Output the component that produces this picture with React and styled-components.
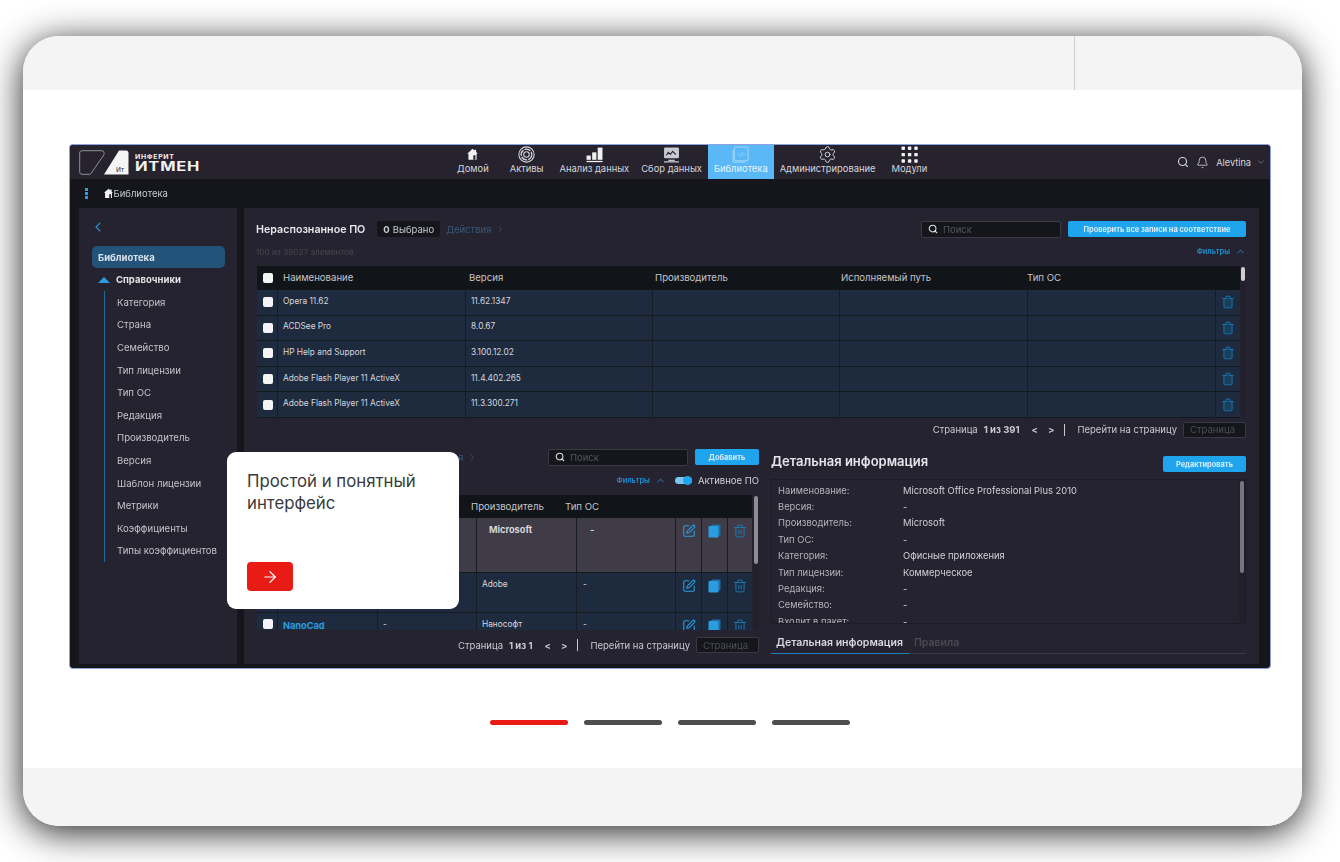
import React from "react";
import styled, { createGlobalStyle } from "styled-components";
import {
  ArrowRight,
  Bell,
  ChevronDown,
  ChevronLeft,
  ChevronRight,
  ChevronUp,
  Search,
  Settings,
  SquarePen,
  Trash2,
} from "lucide-react";

const GlobalStyle = createGlobalStyle`
  html, body {
    margin: 0;
    padding: 0;
    background: #fff;
    overflow: hidden;
  }
  body {
    font-family: Inter, "Noto Sans", sans-serif;
  }
`;

const Page = styled.div`
  width: 1340px;
  height: 862px;
  box-sizing: border-box;
  padding: 36px 38px 36px 23px;
`;

const Card = styled.div`
  height: 790px;
  display: flex;
  flex-direction: column;
  border-radius: 36px;
  background: #fff;
  overflow: hidden;
  box-shadow: 0 6px 36px rgba(0, 0, 0, 0.88);
`;

const TopStrip = styled.div`
  height: 54px;
  flex: none;
  background: #f4f4f4;
`;

const TopDivider = styled.div`
  width: 1052px;
  height: 100%;
  box-sizing: border-box;
  border-right: 1px solid #cfcfcf;
`;

const Stage = styled.div`
  flex: 1;
  display: flex;
  flex-direction: column;
  align-items: flex-start;
  padding: 54px 0 0 46px;
`;

const BottomStrip = styled.div`
  height: 58px;
  flex: none;
  background: #f4f4f4;
`;

const Pager = styled.div`
  display: flex;
  gap: 16px;
  margin: 51px 0 0 421px;
`;

const PagerBar = styled.div`
  width: 78px;
  height: 5px;
  border-radius: 3px;
  background: ${(p) => (p.$active ? "#e81c14" : "#4d4e50")};
`;

const AppFrame = styled.div`
  position: relative;
  width: 1202px;
  height: 525px;
  box-sizing: border-box;
  display: flex;
  flex-direction: column;
  border: 1px solid #8ea2dc;
  border-radius: 4px;
  background: #14161b;
  color: #d9d9de;
  overflow: hidden;
`;

const Blurred = styled.div`
  display: flex;
  flex-direction: column;
  flex: 1;
  min-height: 0;
  filter: blur(0.55px);
`;

const AppHeader = styled.header`
  height: 34px;
  flex: none;
  display: flex;
  align-items: stretch;
  background: #26232f;
`;

const Logo = styled.div`
  width: 381px;
  flex: none;
  display: flex;
  align-items: center;
  padding-left: 9px;
  box-sizing: border-box;
`;

const LogoMark = styled.svg`
  width: 50px;
  height: 25px;
  flex: none;
`;

const LogoWords = styled.div`
  display: flex;
  flex-direction: column;
  gap: 1px;
  margin-left: 6px;
  color: #f2f2f2;
`;

const LogoSmall = styled.span`
  font-size: 6px;
  line-height: 7px;
  font-weight: 700;
  letter-spacing: 0.6px;
  transform: scaleX(1.15);
  transform-origin: left;
`;

const LogoBig = styled.span`
  font-size: 13px;
  line-height: 11px;
  font-weight: 700;
  letter-spacing: 0.6px;
  transform: scaleX(1.27);
  transform-origin: left;
`;

const Nav = styled.nav`
  display: flex;
  align-items: stretch;
`;

const NavItem = styled.div`
  display: flex;
  flex-direction: column;
  align-items: center;
  justify-content: flex-end;
  padding: 0 6px 5.5px;
  margin-right: ${(p) => p.$gap || 0}px;
  font-size: 9.4px;
  line-height: 11px;
  white-space: nowrap;
  color: ${(p) => (p.$active ? "#e6f4fe" : "#d5d5da")};
  background: ${(p) => (p.$active ? "#5ab8f6" : "transparent")};
`;

const NavIcon = styled.svg`
  width: 17px;
  height: 17px;
  flex: none;
`;

const HomeIcon = styled.svg`
  box-sizing: border-box;
  width: ${(p) => p.$size}px;
  height: ${(p) => p.$size}px;
  padding: ${(p) => p.$pad || 0}px 0;
  flex: none;
`;

const GearIcon = styled(Settings)`
  margin: -1px 0;
`;

const UserBox = styled.div`
  margin-left: auto;
  display: flex;
  align-items: center;
  gap: 7px;
  padding-right: 4px;
  font-size: 9.2px;
  color: #d5d5da;
`;

const UserChevron = styled(ChevronDown)`
  margin-left: -2px;
  color: #777;
`;

const Crumbs = styled.div`
  height: 29px;
  flex: none;
  display: flex;
  align-items: center;
  padding-left: 15px;
  font-size: 9.5px;
  color: #c9c9cf;
`;

const DotsColumn = styled.div`
  display: flex;
  flex-direction: column;
  gap: 1.5px;
  margin-right: 15px;
`;

const BlueDot = styled.span`
  width: 2.5px;
  height: 2.5px;
  background: #2a9de0;
`;

const Body = styled.div`
  flex: 1;
  min-height: 0;
  display: flex;
  gap: 7px;
  padding: 0 11px 4px 9px;
`;

const Sidebar = styled.aside`
  width: 158px;
  flex: none;
  box-sizing: border-box;
  padding: 11px 12px 0 13px;
  background: #25232f;
`;

const BackIcon = styled(ChevronLeft)`
  display: block;
  margin-left: -2px;
  color: #2a8fd0;
`;

const LibraryPill = styled.div`
  height: 22px;
  margin-top: 11px;
  display: flex;
  align-items: center;
  padding-left: 6px;
  border-radius: 5px;
  background: #235378;
  font-size: 9.5px;
  font-weight: 700;
  color: #d8e2ea;
`;

const TreeHead = styled.div`
  height: 23px;
  display: flex;
  align-items: center;
  gap: 6px;
  padding-left: 6px;
  font-size: 9.5px;
  font-weight: 700;
  color: #e4e4e8;
`;

const Triangle = styled.span`
  width: 0;
  height: 0;
  border-left: 6px solid transparent;
  border-right: 6px solid transparent;
  border-bottom: 6px solid #2a9de0;
`;

const TreeList = styled.div`
  margin-left: 12px;
  padding-left: 12px;
  border-left: 1px solid #1e6a9c;
  height: 271px;
  width: 125px;
  white-space: nowrap;
`;

const TreeItem = styled.div`
  height: 22.6px;
  display: flex;
  align-items: center;
  font-size: 9.6px;
  color: #c4c4ca;
`;

const Main = styled.main`
  flex: 1;
  min-width: 0;
  box-sizing: border-box;
  padding: 13px 13px 0;
  background: #25232f;
`;

const Toolbar = styled.div`
  height: 16px;
  display: flex;
  align-items: center;
`;

const PanelTitle = styled.h2`
  margin: 0 0 0 -1px;
  font-size: 10.7px;
  font-weight: 600;
  color: #e6e6ea;
  white-space: nowrap;
`;

const SelectedBadge = styled.div`
  display: flex;
  align-items: center;
  gap: 3px;
  height: 16px;
  margin-left: 12px;
  padding: 0 6px;
  border-radius: 2px;
  background: #14161b;
  font-size: 9.5px;
  color: #c9c9cf;
`;

const ActionsLink = styled.div`
  display: flex;
  align-items: center;
  gap: 5px;
  margin-left: ${(p) => p.$left || 6}px;
  font-size: 9.5px;
  color: #345a7a;
`;

const SearchBox = styled.div`
  width: ${(p) => p.$width}px;
  height: 17px;
  box-sizing: border-box;
  display: flex;
  align-items: center;
  gap: 5px;
  margin-left: auto;
  padding-left: 6px;
  border: 1px solid #3a3a44;
  border-radius: 2px;
  background: #14161b;
  font-size: 9.5px;
  color: #55555e;
`;

const BlueButton = styled.div`
  width: ${(p) => p.$width}px;
  height: 16px;
  display: flex;
  align-items: center;
  justify-content: center;
  margin-left: 7px;
  border-radius: 2px;
  background: #1fa5ee;
  font-size: 7.4px;
  font-weight: 700;
  color: #d5ecfb;
  white-space: nowrap;
`;

const MetaRow = styled.div`
  height: 29px;
  margin-left: -1px;
  display: flex;
  align-items: center;
  justify-content: space-between;
  font-size: 8.2px;
  color: #45454f;
`;

const FiltersLink = styled.div`
  display: flex;
  align-items: center;
  gap: 5px;
  font-size: 7.4px;
  font-weight: 600;
  color: #1f8fd2;
`;

const TableWrap = styled.div`
  height: ${(p) => p.$height}px;
  display: flex;
  overflow: hidden;
`;

const Table = styled.div`
  width: ${(p) => p.$width}px;
  flex: none;
`;

const HeadRow = styled.div`
  height: ${(p) => p.$height}px;
  box-sizing: border-box;
  padding-bottom: 1px;
  display: grid;
  grid-template-columns: ${(p) => p.$cols};
  align-items: center;
  background: #111418;
  font-size: 9.6px;
  color: #c4c4ca;
`;

const Check = styled.span`
  width: 10px;
  height: 10px;
  margin-left: 6px;
  border-radius: 2px;
  background: #f4f4f4;
`;

const DataRow = styled.div`
  height: ${(p) => p.$height}px;
  box-sizing: border-box;
  display: grid;
  grid-template-columns: ${(p) => p.$cols};
  border-bottom: 1px solid #14181f;
  background: ${(p) => (p.$selected ? "#3f3c47" : "#1e2b3f")};
  font-size: 8.3px;
  color: #d6d6dc;
`;

const Cell = styled.div`
  min-width: 0;
  box-sizing: border-box;
  display: flex;
  align-items: ${(p) => (p.$top ? "flex-start" : "center")};
  justify-content: ${(p) => (p.$center ? "center" : "flex-start")};
  padding-top: ${(p) => (p.$top ? p.$topGap || 6 : 0)}px;
  padding-bottom: ${(p) => (p.$lift ? 3 : 0)}px;
  padding-left: ${(p) => (p.$pad !== undefined ? p.$pad : 5)}px;
  border-left: ${(p) => (p.$first ? "none" : "1px solid #161b25")};
  font-weight: ${(p) => (p.$bold ? 700 : 400)};
  font-size: ${(p) => (p.$bold ? "9.2px" : "inherit")};
  color: ${(p) => (p.$link ? "#2a9de0" : "inherit")};
  white-space: nowrap;
  overflow: hidden;
`;

const ScrollTrack = styled.div`
  width: 6px;
  flex: none;
  box-sizing: border-box;
  margin-left: ${(p) => p.$left || 0}px;
  padding: 1px 1px 0;
  background: #22212b;
`;

const ScrollThumb = styled.div`
  height: ${(p) => p.$height}px;
  border-radius: 2px;
  background: ${(p) => p.$color || "#cfcfd3"};
`;

const Pagination = styled.div`
  height: ${(p) => p.$height}px;
  display: flex;
  align-items: center;
  justify-content: flex-end;
  font-size: 9.5px;
  color: #c9c9cf;
  white-space: nowrap;
`;

const PageCount = styled.b`
  margin-left: 6px;
  font-weight: 700;
`;

const PageArrows = styled.span`
  display: flex;
  gap: 10px;
  margin: 0 10px 0 12px;
  font-weight: 700;
`;

const PageSep = styled.span`
  width: 1px;
  height: 12px;
  margin-right: 12px;
  background: #c9c9cf;
`;

const PageInput = styled.div`
  width: 63px;
  height: 16px;
  box-sizing: border-box;
  display: flex;
  align-items: center;
  margin-left: 6px;
  padding-left: 6px;
  border: 1px solid #3a3a44;
  border-radius: 2px;
  background: #14161b;
  color: #4e4e58;
`;

const LowerGrid = styled.div`
  display: grid;
  grid-template-columns: 502px 475px;
  gap: 12px;
  margin-top: 8px;
`;

const ToggleRow = styled.div`
  height: 30px;
  display: flex;
  align-items: center;
  justify-content: flex-end;
  gap: 6px;
  font-size: 9.5px;
  color: #d0d0d6;
`;

const ToggleTrack = styled.span`
  width: 17px;
  height: 7px;
  display: flex;
  align-items: center;
  justify-content: flex-end;
  margin-left: 3px;
  border-radius: 4px;
  background: #7cc4ef;
`;

const ToggleKnob = styled.span`
  width: 9px;
  height: 9px;
  border-radius: 50%;
  background: #1fa5ee;
`;

const DetailHead = styled.div`
  height: 30px;
  display: flex;
  align-items: flex-start;
  justify-content: space-between;
  padding-top: 7px;
  box-sizing: border-box;
`;

const DetailTitle = styled.h3`
  margin: -3px 0 0;
  font-size: 13px;
  line-height: 16px;
  font-weight: 600;
  color: #e6e6ea;
`;

const DetailBox = styled.div`
  position: relative;
  height: 145px;
  box-sizing: border-box;
  display: flex;
  border: 1px solid #1d1c25;
  overflow: hidden;
`;

const DetailList = styled.div`
  flex: 1;
  padding: 2px 0 0 6px;
`;

const DetailRow = styled.div`
  height: 16.4px;
  display: flex;
  align-items: center;
  font-size: 9.4px;
`;

const DetailLabel = styled.span`
  width: 125px;
  flex: none;
  color: #b3b3ba;
`;

const DetailValue = styled.span`
  color: #d2d2d8;
`;

const Tabs = styled.div`
  height: 20px;
  margin-top: 9px;
  display: flex;
  align-items: stretch;
  border-bottom: 1px solid #3a3944;
`;

const Tab = styled.div`
  display: flex;
  align-items: center;
  padding: 0 ${(p) => (p.$active ? "6px" : "5px")} 2px 5px;
  margin-bottom: -1px;
  font-size: 10.5px;
  font-weight: 600;
  color: ${(p) => (p.$active ? "#d9d9de" : "#4a4a54")};
  border-bottom: 1px solid ${(p) => (p.$active ? "#1e7fbd" : "transparent")};
`;

const Callout = styled.div`
  position: absolute;
  left: 157px;
  top: 307px;
  width: 232px;
  height: 157px;
  box-sizing: border-box;
  display: flex;
  flex-direction: column;
  align-items: flex-start;
  justify-content: space-between;
  padding: 18px 20px;
  border-radius: 9px;
  background: #fff;
`;

const CalloutText = styled.div`
  font-size: 16.8px;
  line-height: 22px;
  color: #3a3a3c;
`;

const CalloutButton = styled.div`
  width: 46px;
  height: 29px;
  display: flex;
  align-items: center;
  justify-content: center;
  border-radius: 4px;
  background: #e81c14;
  color: #fff;
`;

const HomeGlyph = ({ size, pad }) => (
  <HomeIcon viewBox="0 0 16 16" $size={size} $pad={pad}>
    <path d="M8 1 1.5 7H3v7.5h10V7h1.5L12.5 5V2h-2v1.2z" fill="#f2f2f2" />
    <rect x="9" y="9" width="2.6" height="5.5" fill="#26232f" />
  </HomeIcon>
);

const AssetsGlyph = () => (
  <NavIcon viewBox="0 0 16 16" fill="none" stroke="#d8d8dc">
    <circle cx="8" cy="8" r="7.2" strokeWidth="1" />
    <circle cx="8" cy="8" r="5" strokeWidth="1.2" strokeDasharray="6 1" />
    <circle cx="8" cy="8" r="2.6" strokeWidth="1" />
  </NavIcon>
);

const ChartGlyph = () => (
  <NavIcon viewBox="0 0 16 16" fill="#f0f0f0">
    <rect x="0.5" y="9" width="4" height="4" />
    <rect x="5.8" y="6" width="4" height="7" />
    <rect x="11" y="1.5" width="4.5" height="11.5" />
    <rect x="0.5" y="14" width="15" height="1.2" />
  </NavIcon>
);

const CollectGlyph = () => (
  <NavIcon viewBox="0 0 16 16" fill="none">
    <rect x="1" y="1.5" width="14" height="10" rx="1" fill="#c9c9ce" />
    <path d="M3 9l2-3 2 2 2-3 3 3" stroke="#26232f" strokeWidth="1" />
    <path d="M5 13.5h6M1 15h14" stroke="#c9c9ce" strokeWidth="1.2" />
  </NavIcon>
);

const LibraryGlyph = () => (
  <NavIcon viewBox="0 0 16 16" fill="none" stroke="#9bd6fa">
    <rect x="2.2" y="1" width="13" height="13" rx="1.5" strokeWidth="1" />
    <path d="M1 4v10.5a.8.8 0 0 0 .8.8H12" strokeWidth="1" />
    <path d="M7 6.5 5.5 8 7 9.5M10.5 6.5 12 8l-1.5 1.5M9.4 6l-1.2 4" strokeWidth="0.8" />
  </NavIcon>
);

const ModulesGlyph = () => (
  <NavIcon viewBox="0 0 16 16" fill="#f2f2f2">
    {[0, 1, 2].flatMap((r) =>
      [0, 1, 2].map((c) => (
        <rect key={`${r}-${c}`} x={0.5 + c * 6} y={0.5 + r * 6} width="3.2" height="3.2" rx="0.6" />
      ))
    )}
  </NavIcon>
);

const CopyGlyph = () => (
  <svg width="13" height="14" viewBox="0 0 13 14" fill="#2a9de0">
    <rect x="3" y="0.5" width="9.5" height="11" rx="1" fill="#1b6ea6" />
    <rect x="0.5" y="2" width="10" height="11.5" rx="1" />
  </svg>
);

const TopTrash = () => <Trash2 size={14} color="#1c74ad" fill="#17405f" strokeWidth={1.6} />;

const navItems = [
  { label: "Домой", icon: <HomeGlyph size={17} pad={2} />, gap: 9 },
  { label: "Активы", icon: <AssetsGlyph />, gap: 4 },
  { label: "Анализ данных", icon: <ChartGlyph />, gap: 0 },
  { label: "Сбор данных", icon: <CollectGlyph />, gap: 0 },
  { label: "Библиотека", icon: <LibraryGlyph />, active: true, gap: 0 },
  { label: "Администрирование", icon: <GearIcon size={19} strokeWidth={1.2} color="#d8d8dc" />, gap: 4 },
  { label: "Модули", icon: <ModulesGlyph />, gap: 0 },
];

const treeItems = [
  "Категория",
  "Страна",
  "Семейство",
  "Тип лицензии",
  "Тип ОС",
  "Редакция",
  "Производитель",
  "Версия",
  "Шаблон лицензии",
  "Метрики",
  "Коэффициенты",
  "Типы коэффициентов",
];

const softwareRows = [
  ["Opera 11.62", "11.62.1347"],
  ["ACDSee Pro", "8.0.67"],
  ["HP Help and Support", "3.100.12.02"],
  ["Adobe Flash Player 11 ActiveX", "11.4.402.265"],
  ["Adobe Flash Player 11 ActiveX", "11.3.300.271"],
];

const detailRows = [
  ["Наименование:", "Microsoft Office Professional Plus 2010"],
  ["Версия:", "-"],
  ["Производитель:", "Microsoft"],
  ["Тип ОС:", "-"],
  ["Категория:", "Офисные приложения"],
  ["Тип лицензии:", "Коммерческое"],
  ["Редакция:", "-"],
  ["Семейство:", "-"],
  ["Входит в пакет:", "-"],
];

const TOP_COLS = "20px 188px 187px 187px 188px 188px 25px";
const TOP_HEAD = "26px 186px 186px 186px 186px 1fr";
const LOW_COLS = "20px 100px 99px 100px 99px 26px 26px 25px";
const LOW_HEAD = "214px 94px 1fr";

const lowerRows = [
  { height: 55, selected: true, maker: "Microsoft" },
  { height: 40, maker: "Adobe" },
  { height: 40, name: "NanoCad", version: "-", maker: "Нанософт" },
];

const Actions = () => (
  <>
    <Cell $center $pad={0} $top><SquarePen size={14} color="#2a9de0" strokeWidth={1.8} /></Cell>
    <Cell $center $pad={0} $top><CopyGlyph /></Cell>
    <Cell $center $pad={0} $top><Trash2 size={14} color="#1c7cb8" strokeWidth={1.6} /></Cell>
  </>
);

const PagerControls = ({ count }) => (
  <>
    Страница
    <PageCount>{count}</PageCount>
    <PageArrows>
      <span>&lt;</span>
      <span>&gt;</span>
    </PageArrows>
    <PageSep />
    Перейти на страницу
    <PageInput>Страница</PageInput>
  </>
);

export default function App() {
  return (
    <>
      <GlobalStyle />
      <Page>
        <Card>
          <TopStrip>
            <TopDivider />
          </TopStrip>
          <Stage>
            <AppFrame>
              <Blurred>
                <AppHeader>
                  <Logo>
                    <LogoMark viewBox="0 0 50 25">
                      <path
                        d="M3 .7h20a2 2 0 0 1 2 2v2L12 23.5a1.5 1.5 0 0 1-1 .8H3A2.3 2.3 0 0 1 .7 22V3A2.3 2.3 0 0 1 3 .7z"
                        fill="none"
                        stroke="#8f8f96"
                        strokeWidth="1"
                      />
                      <path d="M40 .5h7a2.5 2.5 0 0 1 2.5 2.5v21.5H25z" fill="#f5f5f5" />
                      <text x="37" y="21.5" fontSize="6.5" fontFamily="Inter, sans-serif" fill="#26232f">Ит</text>
                    </LogoMark>
                    <LogoWords>
                      <LogoSmall>ИНФЕРИТ</LogoSmall>
                      <LogoBig>ИТМЕН</LogoBig>
                    </LogoWords>
                  </Logo>
                  <Nav>
                    {navItems.map((item) => (
                      <NavItem key={item.label} $active={item.active} $gap={item.gap}>
                        {item.icon}
                        {item.label}
                      </NavItem>
                    ))}
                  </Nav>
                  <UserBox>
                    <Search size={12} strokeWidth={2.2} />
                    <Bell size={13} strokeWidth={1.5} />
                    Alevtina
                    <UserChevron size={10} />
                  </UserBox>
                </AppHeader>
                <Crumbs>
                  <DotsColumn>
                    <BlueDot />
                    <BlueDot />
                    <BlueDot />
                  </DotsColumn>
                  <HomeGlyph size={11} />
                  Библиотека
                </Crumbs>
                <Body>
                  <Sidebar>
                    <BackIcon size={16} strokeWidth={1.6} />
                    <LibraryPill>Библиотека</LibraryPill>
                    <TreeHead>
                      <Triangle />
                      Справочники
                    </TreeHead>
                    <TreeList>
                      {treeItems.map((t) => (
                        <TreeItem key={t}>{t}</TreeItem>
                      ))}
                    </TreeList>
                  </Sidebar>
                  <Main>
                    <Toolbar>
                      <PanelTitle>Нераспознанное ПО</PanelTitle>
                      <SelectedBadge>
                        <b>0</b> Выбрано
                      </SelectedBadge>
                      <ActionsLink>
                        Действия <ChevronRight size={9} />
                      </ActionsLink>
                      <SearchBox $width={140}>
                        <Search size={10} color="#e0e0e4" strokeWidth={2.6} />
                        Поиск
                      </SearchBox>
                      <BlueButton $width={178}>Проверить все записи на соответствие</BlueButton>
                    </Toolbar>
                    <MetaRow>
                      100 из 39027 элементов
                      <FiltersLink>
                        Фильтры <ChevronUp size={11} />
                      </FiltersLink>
                    </MetaRow>
                    <TableWrap $height={152}>
                      <Table $width={983}>
                        <HeadRow $height={24} $cols={TOP_HEAD}>
                          <Check />
                          <span>Наименование</span>
                          <span>Версия</span>
                          <span>Производитель</span>
                          <span>Исполняемый путь</span>
                          <span>Тип ОС</span>
                        </HeadRow>
                        {softwareRows.map(([name, version], i) => (
                          <DataRow key={i} $height={25.6} $cols={TOP_COLS}>
                            <Cell $first $pad={0}><Check /></Cell>
                            <Cell $lift>{name}</Cell>
                            <Cell $lift>{version}</Cell>
                            <Cell />
                            <Cell />
                            <Cell />
                            <Cell $center $pad={0}><TopTrash /></Cell>
                          </DataRow>
                        ))}
                      </Table>
                      <ScrollTrack>
                        <ScrollThumb $height={14} />
                      </ScrollTrack>
                    </TableWrap>
                    <Pagination $height={23}>
                      <PagerControls count="1 из 391" />
                    </Pagination>
                    <LowerGrid>
                      <section>
                        <Toolbar>
                          <ActionsLink $left={161}>
                            Действия <ChevronRight size={9} />
                          </ActionsLink>
                          <SearchBox $width={140}>
                            <Search size={10} color="#e0e0e4" strokeWidth={2.6} />
                            Поиск
                          </SearchBox>
                          <BlueButton $width={64}>Добавить</BlueButton>
                        </Toolbar>
                        <ToggleRow>
                          <FiltersLink>
                            Фильтры <ChevronUp size={11} />
                          </FiltersLink>
                          <ToggleTrack>
                            <ToggleKnob />
                          </ToggleTrack>
                          Активное ПО
                        </ToggleRow>
                        <TableWrap $height={135}>
                          <Table $width={495}>
                            <HeadRow $height={23} $cols={LOW_HEAD}>
                              <span />
                              <span>Производитель</span>
                              <span>Тип ОС</span>
                            </HeadRow>
                            {lowerRows.map((row) => (
                              <DataRow key={row.maker} $height={row.height} $cols={LOW_COLS} $selected={row.selected}>
                                <Cell $first $pad={0} $top><Check /></Cell>
                                <Cell $link $top $topGap={7} $bold={!!row.name}>{row.name}</Cell>
                                <Cell $top>{row.version}</Cell>
                                <Cell $top $bold={row.selected} $pad={row.selected ? 12 : 5}>{row.maker}</Cell>
                                <Cell $top $bold={row.selected} $pad={row.selected ? 13 : 6}>-</Cell>
                                <Actions />
                              </DataRow>
                            ))}
                          </Table>
                          <ScrollTrack $left={1}>
                            <ScrollThumb $height={68} $color="#8d8d93" />
                          </ScrollTrack>
                        </TableWrap>
                        <Pagination $height={30}>
                          <PagerControls count="1 из 1" />
                        </Pagination>
                      </section>
                      <section>
                        <DetailHead>
                          <DetailTitle>Детальная информация</DetailTitle>
                          <BlueButton $width={83}>Редактировать</BlueButton>
                        </DetailHead>
                        <DetailBox>
                          <DetailList>
                            {detailRows.map(([label, value]) => (
                              <DetailRow key={label}>
                                <DetailLabel>{label}</DetailLabel>
                                <DetailValue>{value}</DetailValue>
                              </DetailRow>
                            ))}
                          </DetailList>
                          <ScrollTrack>
                            <ScrollThumb $height={92} $color="#75757b" />
                          </ScrollTrack>
                        </DetailBox>
                        <Tabs>
                          <Tab $active>Детальная информация</Tab>
                          <Tab>Правила</Tab>
                        </Tabs>
                      </section>
                    </LowerGrid>
                  </Main>
                </Body>
              </Blurred>
              <Callout>
                <CalloutText>
                  Простой и понятный
                  <br />
                  интерфейс
                </CalloutText>
                <CalloutButton>
                  <ArrowRight size={18} strokeWidth={1.6} />
                </CalloutButton>
              </Callout>
            </AppFrame>
            <Pager>
              <PagerBar $active />
              <PagerBar />
              <PagerBar />
              <PagerBar />
            </Pager>
          </Stage>
          <BottomStrip />
        </Card>
      </Page>
    </>
  );
}
